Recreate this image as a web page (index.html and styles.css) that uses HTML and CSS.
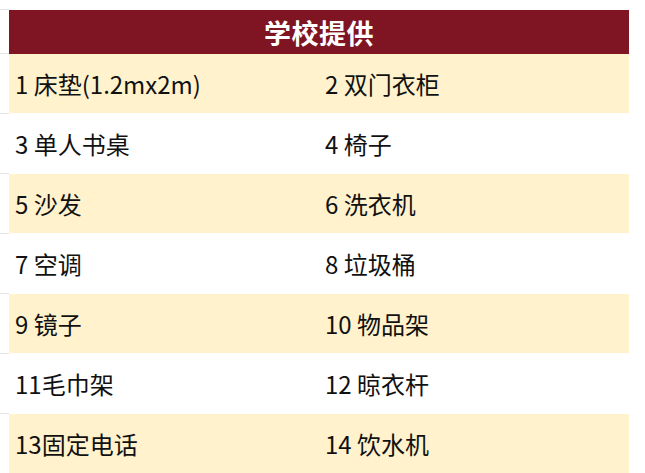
FILE: index.html
```html
<!DOCTYPE html>
<html lang="zh-CN">
<head>
<meta charset="utf-8">
<title>学校提供</title>
<link rel="stylesheet" href="styles.css">
</head>
<body>
<div class="sheet">
  <div class="title">学校提供</div>
  <div class="row alt"><div class="cell">1 床垫(1.2mx2m)</div><div class="cell">2 双门衣柜</div></div>
  <div class="row"><div class="cell">3 单人书桌</div><div class="cell">4 椅子</div></div>
  <div class="row alt"><div class="cell">5 沙发</div><div class="cell">6 洗衣机</div></div>
  <div class="row"><div class="cell">7 空调</div><div class="cell">8 垃圾桶</div></div>
  <div class="row alt"><div class="cell">9 镜子</div><div class="cell">10 物品架</div></div>
  <div class="row"><div class="cell">11毛巾架</div><div class="cell">12 晾衣杆</div></div>
  <div class="row alt"><div class="cell">13固定电话</div><div class="cell">14 饮水机</div></div>
</div>
</body>
</html>
```
FILE: styles.css
```css
html, body {
  margin: 0;
  padding: 0;
  background: #ffffff;
}

body {
  width: 645px;
  height: 473px;
  overflow: hidden;
  font-family: "Noto Sans CJK SC", "Noto Sans", sans-serif;
  background-image:
    linear-gradient(#e4e4e4, #e4e4e4),
    repeating-linear-gradient(to bottom, transparent 0 59px, #e4e4e4 59px 60px);
  background-repeat: no-repeat, no-repeat;
  background-size: 9px 1px, 9px 480px;
  background-position: 0 9px, 0 -6px;
}

.sheet {
  margin: 10px 0 0 9px;
  width: 620px;
}

.title {
  height: 44px;
  background: #7f1422;
  color: #ffffff;
  font-size: 27px;
  font-weight: 700;
  display: flex;
  align-items: center;
  justify-content: center;
  letter-spacing: 0.5px;
}

.row {
  height: 59px;
  margin-bottom: 1px;
  display: grid;
  grid-template-columns: 310px 1fr;
  align-items: center;
  color: #111111;
  font-size: 24px;
  font-weight: 400;
  background: #ffffff;
}

.row.alt {
  background: #fff2cd;
}

.cell {
  padding-left: 6px;
  white-space: nowrap;
}
```
